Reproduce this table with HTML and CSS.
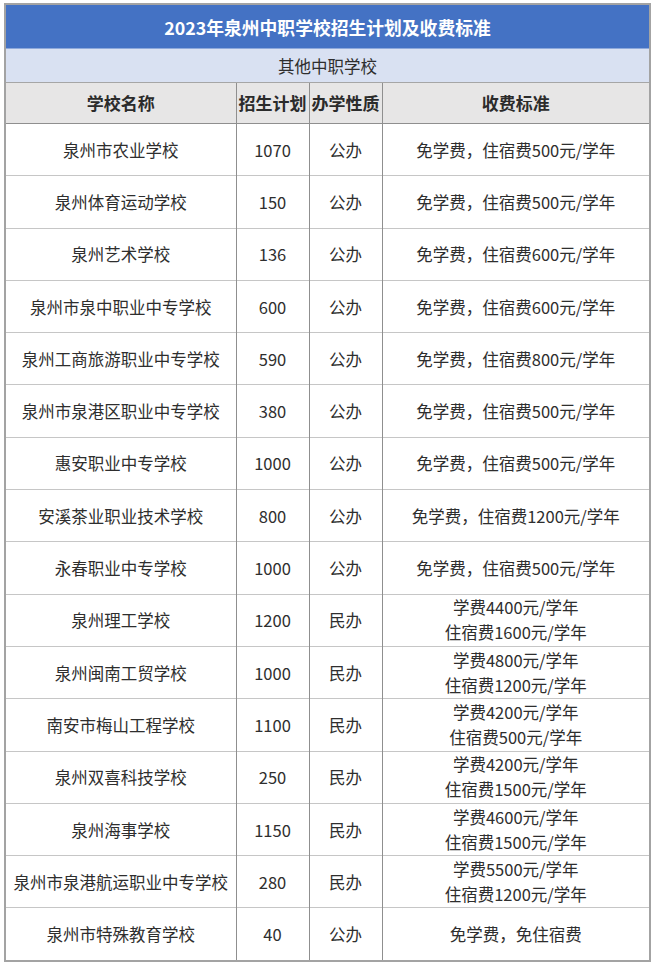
FILE: index.html
```html
<!DOCTYPE html>
<html lang="zh-CN">
<head>
<meta charset="utf-8">
<title>2023年泉州中职学校招生计划及收费标准</title>
<link rel="stylesheet" href="styles.css">
</head>
<body>
<div class="wrap">
<table class="plan">
  <colgroup>
    <col class="c-name"><col class="c-num"><col class="c-type"><col class="c-fee">
  </colgroup>
  <thead>
    <tr class="title"><th colspan="4">2023年泉州中职学校招生计划及收费标准</th></tr>
    <tr class="sub"><td colspan="4">其他中职学校</td></tr>
    <tr class="head"><th>学校名称</th><th>招生计划</th><th>办学性质</th><th>收费标准</th></tr>
  </thead>
  <tbody>
    <tr><td>泉州市农业学校</td><td>1070</td><td>公办</td><td>免学费，住宿费500元/学年</td></tr>
    <tr><td>泉州体育运动学校</td><td>150</td><td>公办</td><td>免学费，住宿费500元/学年</td></tr>
    <tr><td>泉州艺术学校</td><td>136</td><td>公办</td><td>免学费，住宿费600元/学年</td></tr>
    <tr><td>泉州市泉中职业中专学校</td><td>600</td><td>公办</td><td>免学费，住宿费600元/学年</td></tr>
    <tr><td>泉州工商旅游职业中专学校</td><td>590</td><td>公办</td><td>免学费，住宿费800元/学年</td></tr>
    <tr><td>泉州市泉港区职业中专学校</td><td>380</td><td>公办</td><td>免学费，住宿费500元/学年</td></tr>
    <tr><td>惠安职业中专学校</td><td>1000</td><td>公办</td><td>免学费，住宿费500元/学年</td></tr>
    <tr><td>安溪茶业职业技术学校</td><td>800</td><td>公办</td><td>免学费，住宿费1200元/学年</td></tr>
    <tr><td>永春职业中专学校</td><td>1000</td><td>公办</td><td>免学费，住宿费500元/学年</td></tr>
    <tr><td>泉州理工学校</td><td>1200</td><td>民办</td><td class="two">学费4400元/学年<br>住宿费1600元/学年</td></tr>
    <tr><td>泉州闽南工贸学校</td><td>1000</td><td>民办</td><td class="two">学费4800元/学年<br>住宿费1200元/学年</td></tr>
    <tr><td>南安市梅山工程学校</td><td>1100</td><td>民办</td><td class="two">学费4200元/学年<br>住宿费500元/学年</td></tr>
    <tr><td>泉州双喜科技学校</td><td>250</td><td>民办</td><td class="two">学费4200元/学年<br>住宿费1500元/学年</td></tr>
    <tr><td>泉州海事学校</td><td>1150</td><td>民办</td><td class="two">学费4600元/学年<br>住宿费1500元/学年</td></tr>
    <tr><td>泉州市泉港航运职业中专学校</td><td>280</td><td>民办</td><td class="two">学费5500元/学年<br>住宿费1200元/学年</td></tr>
    <tr><td>泉州市特殊教育学校</td><td>40</td><td>公办</td><td>免学费，免住宿费</td></tr>
  </tbody>
</table>
</div>
</body>
</html>
```

FILE: styles.css
```css
html, body {
  margin: 0;
  padding: 0;
  background: #ffffff;
}

body {
  font-family: "Noto Sans CJK SC", "Noto Sans", sans-serif;
  color: #2e2e2e;
}

.wrap {
  padding: 3px 0 0 4px;
}

.plan {
  width: 645px;
  border-collapse: collapse;
  table-layout: fixed;
  border: 2px solid #a3a3a3;
}

.c-name { width: 231px; }
.c-num { width: 73px; }
.c-type { width: 73px; }
.c-fee { width: 268px; }

.plan th,
.plan td {
  padding: 0;
  text-align: center;
  vertical-align: middle;
  font-weight: 400;
  font-size: 16.5px;
  line-height: 24px;
  white-space: nowrap;
}

.title th {
  height: 43px;
  background: #4472c4;
  color: #ffffff;
  font-weight: 700;
  font-size: 17.8px;
  border-bottom: 1px solid #8ea9db;
}

.sub td {
  height: 33px;
  background: #d9e1f2;
  border-bottom: 1px solid #a6a6a6;
}

.head th {
  height: 40px;
  background: #e7e6e6;
  font-weight: 700;
  font-size: 17px;
  color: #2b2b2b;
  border-left: 1px solid #8f8f8f;
}

.head th:first-child {
  border-left: none;
}

.plan tbody td {
  height: 51.3px;
  border-top: 1px solid #c6c6c6;
  border-left: 1px solid #8f8f8f;
}

.plan tbody td:first-child {
  border-left: none;
}

.plan tbody tr:first-child td {
  border-top: 1px solid #8f8f8f;
}

.plan td.two {
  line-height: 25px;
}
```
